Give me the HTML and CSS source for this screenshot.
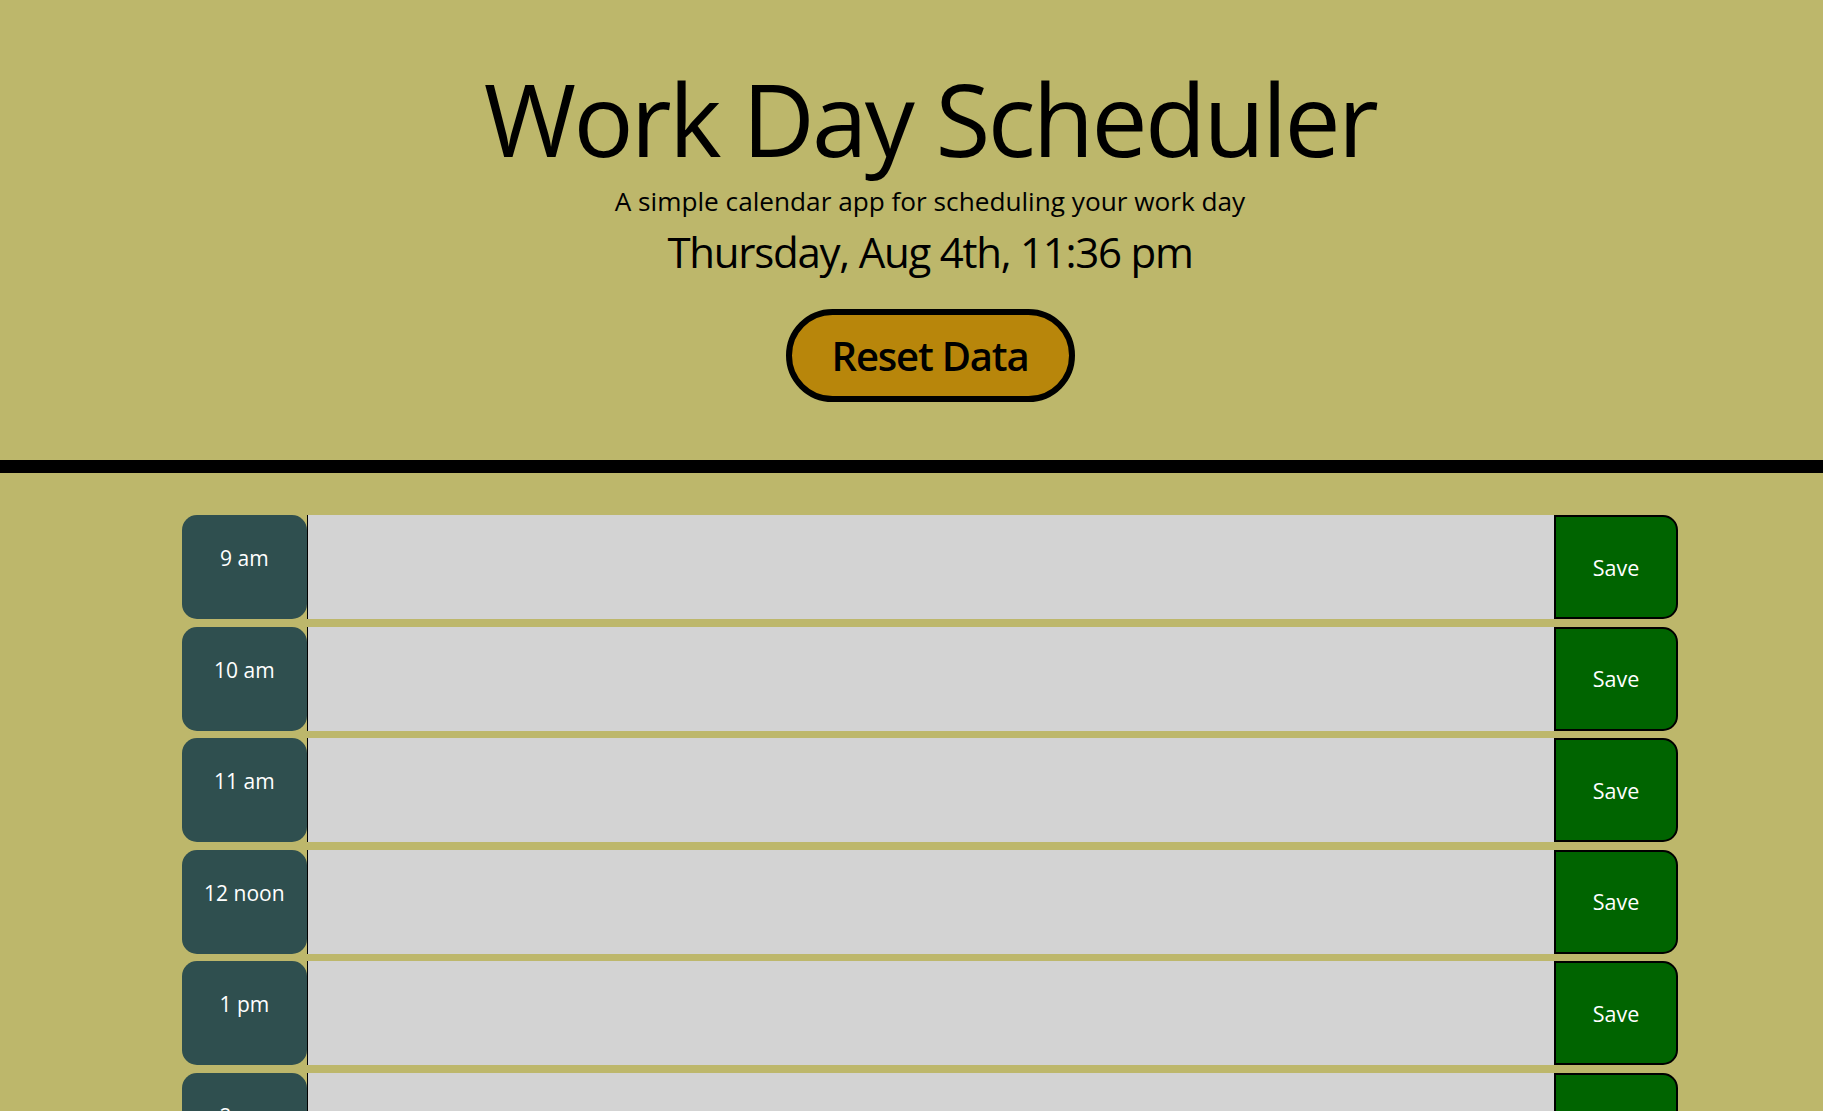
FILE: index.html
```
<!DOCTYPE html>
<html lang="en">
<head>
<meta charset="utf-8">
<title>Work Day Scheduler</title>
<link rel="stylesheet" href="styles.css">
</head>
<body>
<div class="page">
  <header class="jumbotron">
    <h1 class="title">Work Day Scheduler</h1>
    <p class="lead">A simple calendar app for scheduling your work day</p>
    <p class="current-day">Thursday, Aug 4th, 11:36 pm</p>
    <button class="reset-btn" type="button">Reset Data</button>
  </header>
  <main class="container">
    <div class="time-block"><div class="hour">9 am</div><textarea class="description"></textarea><button class="save-btn" type="button">Save</button></div>
    <div class="time-block"><div class="hour">10 am</div><textarea class="description"></textarea><button class="save-btn" type="button">Save</button></div>
    <div class="time-block"><div class="hour">11 am</div><textarea class="description"></textarea><button class="save-btn" type="button">Save</button></div>
    <div class="time-block"><div class="hour">12 noon</div><textarea class="description"></textarea><button class="save-btn" type="button">Save</button></div>
    <div class="time-block"><div class="hour">1 pm</div><textarea class="description"></textarea><button class="save-btn" type="button">Save</button></div>
    <div class="time-block"><div class="hour">2 pm</div><textarea class="description"></textarea><button class="save-btn" type="button">Save</button></div>
    <div class="time-block"><div class="hour">3 pm</div><textarea class="description"></textarea><button class="save-btn" type="button">Save</button></div>
    <div class="time-block"><div class="hour">4 pm</div><textarea class="description"></textarea><button class="save-btn" type="button">Save</button></div>
    <div class="time-block"><div class="hour">5 pm</div><textarea class="description"></textarea><button class="save-btn" type="button">Save</button></div>
  </main>
</div>
</body>
</html>
```
FILE: styles.css
```
html, body {
  margin: 0;
  padding: 0;
  overflow-x: hidden;
  background: #bdb76b;
}

body {
  font-family: "Open Sans", "Noto Sans", sans-serif;
  color: #000;
}

.page {
  width: 1860px;
}

.jumbotron {
  display: flex;
  flex-direction: column;
  align-items: center;
  padding-top: 58px;
  padding-bottom: 58px;
  border-bottom: 13px solid #000;
  text-align: center;
}

.title {
  margin: 0;
  font-size: 100px;
  font-weight: 400;
  letter-spacing: -2.7px;
  line-height: 120px;
}

.lead {
  margin: 8px 0 0;
  font-size: 26.2px;
  font-weight: 400;
  line-height: 30px;
}

.current-day {
  margin: 11px 0 0;
  font-size: 42px;
  font-weight: 400;
  letter-spacing: -1.25px;
  line-height: 50px;
}

.reset-btn {
  margin-top: 32px;
  width: 289px;
  height: 93px;
  padding: 0;
  border: 6px solid #000;
  border-radius: 50px;
  background: #b8860b;
  font-family: inherit;
  font-size: 40px;
  font-weight: 600;
  letter-spacing: -1.2px;
  color: #000;
}

.container {
  width: 1496px;
  margin: 42px auto 0;
  display: flex;
  flex-direction: column;
  gap: 7.5px;
  padding-bottom: 40px;
}

.time-block {
  display: flex;
  height: 104px;
}

.hour {
  width: 124.7px;
  flex: none;
  box-sizing: border-box;
  padding-top: 28px;
  border-radius: 15px;
  background: #2f4f4f;
  color: #fff;
  font-size: 21px;
  line-height: 30px;
  text-align: center;
}

.description {
  flex: 1;
  margin: 0;
  padding: 10px;
  border: none;
  border-left: 1px solid #000;
  background: #d3d3d3;
  resize: none;
  font-family: inherit;
  font-size: 20px;
  outline: none;
}

.save-btn {
  width: 124px;
  flex: none;
  margin: 0;
  padding: 0;
  border: 2px solid #000;
  border-radius: 0 15px 15px 0;
  background: #006400;
  color: #fff;
  font-family: inherit;
  font-size: 21.5px;
}
```
